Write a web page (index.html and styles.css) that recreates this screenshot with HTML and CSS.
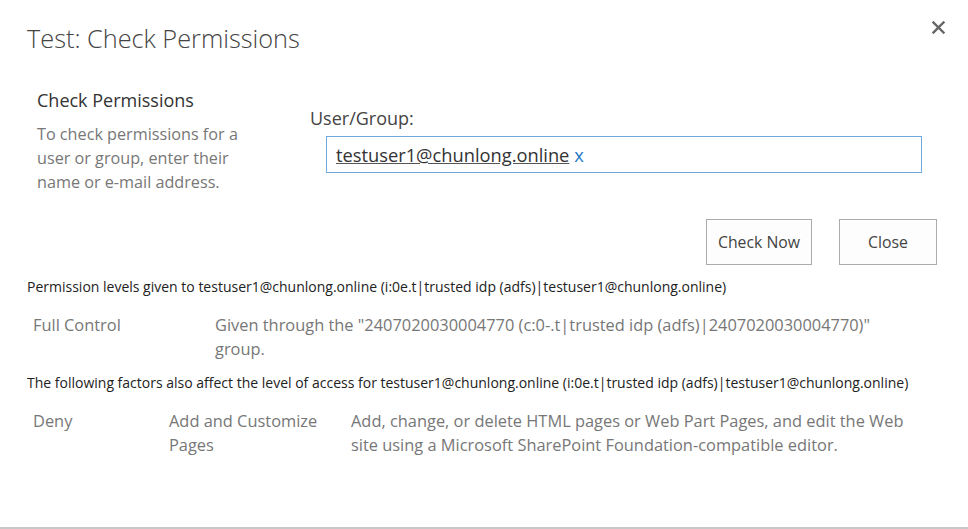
FILE: index.html
```html
<!DOCTYPE html>
<html>
<head>
<meta charset="utf-8">
<link rel="stylesheet" href="styles.css">
</head>
<body>
<div class="dialog">
  <div class="head">
    <h1 class="title">Test: Check Permissions</h1>
    <span class="close-x" aria-label="Close">
      <svg width="13" height="13" viewBox="0 0 13 13"><path d="M1.5 1.5 L11.5 11.5 M11.5 1.5 L1.5 11.5" stroke="#666" stroke-width="2.4" stroke-linecap="square"/></svg>
    </span>
  </div>
  <div class="section">
    <div class="sec-left">
      <h2 class="sec-title">Check Permissions</h2>
      <p class="sec-desc">To check permissions for a user or group, enter their name or e-mail address.</p>
    </div>
    <div class="sec-right">
      <div class="field-label">User/Group:</div>
      <div class="picker"><span class="entity">testuser1@chunlong.online</span> <span class="entity-x">x</span></div>
    </div>
  </div>
  <div class="actions">
    <button class="btn btn-check">Check Now</button>
    <button class="btn btn-close">Close</button>
  </div>
  <div class="results">
    <div class="res-head res-head-1">Permission levels given to testuser1@chunlong.online (i:0e.t|trusted idp (adfs)|testuser1@chunlong.online)</div>
    <div class="row row-perm">
      <div class="c-level">Full Control</div>
      <div class="c-detail">Given through the "2407020030004770 (c:0-.t|trusted idp (adfs)|2407020030004770)" group.</div>
    </div>
    <div class="res-head res-head-2">The following factors also affect the level of access for testuser1@chunlong.online (i:0e.t|trusted idp (adfs)|testuser1@chunlong.online)</div>
    <div class="row row-deny">
      <div class="c-type">Deny</div>
      <div class="c-name">Add and Customize Pages</div>
      <div class="c-desc">Add, change, or delete HTML pages or Web Part Pages, and edit the Web site using a Microsoft SharePoint Foundation-compatible editor.</div>
    </div>
  </div>
</div>
</body>
</html>
```
FILE: styles.css
```css
* { box-sizing: border-box; }
html, body { margin: 0; padding: 0; background: #fff; }
body {
  font-family: "Open Sans", "Noto Sans", sans-serif;
  color: #444;
  width: 968px;
  height: 529px;
  overflow: hidden;
}
.dialog {
  height: 529px;
  border-bottom: 2px solid #c8c8c8;
  padding: 0 0 0 27px;
}
.head {
  display: flex;
  justify-content: space-between;
  align-items: flex-start;
  padding-top: 20px;
  padding-right: 23px;
}
.title {
  margin: 0;
  font-size: 25.3px;
  font-weight: 300;
  line-height: 36px;
  color: #444;
}
.close-x {
  display: block;
  margin-top: 1px;
  width: 13px;
  height: 13px;
}
.close-x svg { display: block; }
.section {
  display: flex;
  align-items: flex-start;
  margin-top: 32px;
}
.sec-left {
  width: 283px;
  padding-left: 10px;
}
.sec-title {
  margin: 0;
  font-size: 18px;
  font-weight: 400;
  line-height: 24px;
  color: #333;
}
.sec-desc {
  margin: 10px 0 0;
  width: 225px;
  font-size: 16.2px;
  line-height: 24px;
  color: #777;
}
.sec-right {
  flex: 1;
  padding-top: 18px;
}
.field-label {
  font-size: 18px;
  line-height: 24px;
  color: #444;
}
.picker {
  margin: 6px 0 0 16px;
  width: 596px;
  height: 37px;
  border: 1px solid #6fa8de;
  padding: 0 9px;
  font-size: 18.3px;
  line-height: 35px;
  white-space: nowrap;
}
.entity { color: #333; text-decoration: underline; text-decoration-color: #555; }
.entity-x { color: #2a7bc6; }
.actions {
  display: flex;
  justify-content: flex-end;
  gap: 27px;
  margin-top: 25px;
  padding-right: 31px;
}
.btn {
  height: 46px;
  background: #fdfdfd;
  border: 1px solid #ababab;
  font-family: inherit;
  font-size: 15.8px;
  color: #444;
  padding: 0;
}
.btn-check { width: 106px; }
.btn-close { width: 98px; }
.res-head {
  font-size: 14px;
  line-height: 18px;
  color: #222;
  white-space: nowrap;
}
.res-head-1 { margin-top: 13px; }
.res-head-2 { margin-top: 13px; }
.row {
  display: flex;
  font-size: 16.4px;
  line-height: 24px;
  color: #777;
  padding-left: 6px;
}
.row-perm { margin-top: 17px; }
.row-deny { margin-top: 17px; }
.c-level { width: 182px; }
.c-detail { width: 690px; }
.c-type { width: 136px; }
.c-name { width: 182px; padding-right: 10px; }
.c-desc { width: 565px; }
```
